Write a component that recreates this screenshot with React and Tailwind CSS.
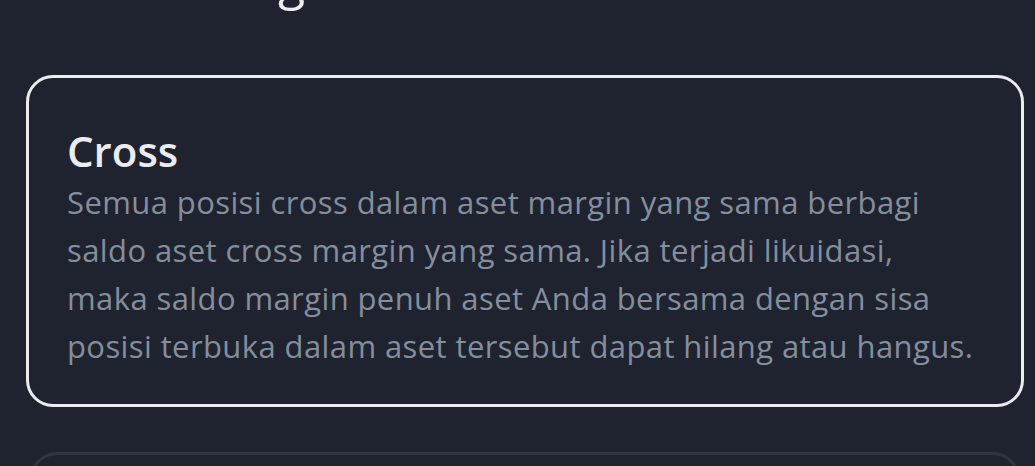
export default function App() {
  return (
    <div className="w-[1035px] h-[466px] overflow-hidden bg-[#1f2330] font-['Open_Sans',sans-serif]">
      <div className="h-[11px] overflow-hidden relative">
        <div className="absolute left-[38px] bottom-[1px] text-[50px] leading-[60px] font-medium text-[#eaecef] whitespace-nowrap">
          Mode Margin
        </div>
      </div>
      <div className="mt-[64px] ml-[26px] w-[998px] h-[332px] rounded-[27px] border-[3px] border-[#eaecef] pl-[38px] pr-[20px] pt-[48px]">
        <div className="text-[42px] leading-[50px] font-semibold text-[#eaecef]">Cross</div>
        <p className="mt-[2px] text-[31px] leading-[48px] tracking-[0.4px] text-[#848e9c] whitespace-nowrap">
          Semua posisi cross dalam aset margin yang sama berbagi
          <br />
          saldo aset cross margin yang sama. Jika terjadi likuidasi,
          <br />
          maka saldo margin penuh aset Anda bersama dengan sisa
          <br />
          posisi terbuka dalam aset tersebut dapat hilang atau hangus.
        </p>
      </div>
      <div className="mt-[45px] ml-[30px] w-[990px] h-[100px] rounded-[27px] border-[3px] border-[#2f3541]"></div>
    </div>
  );
}
